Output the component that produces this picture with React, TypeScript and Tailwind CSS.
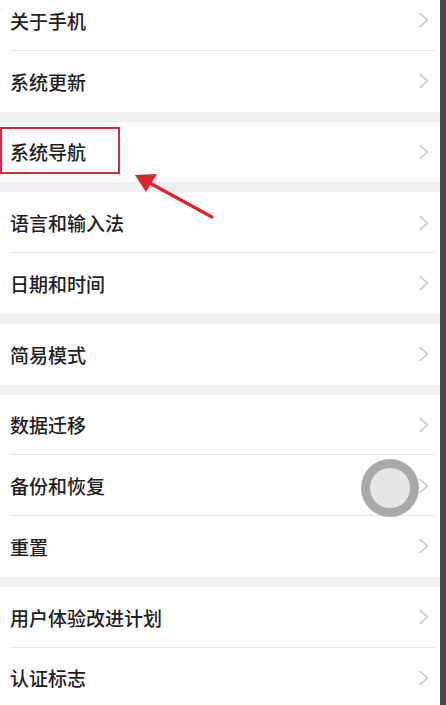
const GROUPS: string[][] = [
  ["关于手机", "系统更新"],
  ["系统导航"],
  ["语言和输入法", "日期和时间"],
  ["简易模式"],
  ["数据迁移", "备份和恢复", "重置"],
  ["用户体验改进计划", "认证标志"],
];

function Chevron() {
  return (
    <svg width="12" height="16" viewBox="0 0 12 16" className="shrink-0">
      <path d="M2 1.5 L9.5 8 L2 14.5" fill="none" stroke="#c6c6c6" strokeWidth="1.6" strokeLinecap="round" strokeLinejoin="round" />
    </svg>
  );
}

function Row({ label, last }: { label: string; last: boolean }) {
  return (
    <div className="relative flex h-[60.75px] items-center justify-between pl-[10px] pr-[10px]">
      <span className="text-[19px] font-medium leading-none text-[#1f1f1f]">{label}</span>
      <Chevron />
      {!last && <div className="absolute bottom-0 left-[10px] right-[5px] h-px bg-[#e6e6e6]" />}
    </div>
  );
}

export default function App() {
  return (
    <div
      className="relative flex h-[705px] w-[446px] overflow-hidden bg-[#484848]"
      style={{ fontFamily: '"Noto Sans CJK SC", "Noto Sans", sans-serif' }}
    >
      <div className="flex w-[440px] flex-col gap-[10px] bg-[#f0f0f0]">
        {GROUPS.map((group, gi) => (
          <div key={gi} className={`bg-[#fdfdfd] ${gi === 0 ? "-mt-[10px]" : ""}`}>
            {group.map((label, i) => (
              <Row key={label} label={label} last={i === group.length - 1} />
            ))}
          </div>
        ))}
      </div>
      <div className="w-[6px]" />

      {/* annotation box */}
      <div className="absolute left-0 top-[127px] h-[47px] w-[120px] border-2 border-[#c9303a]" />

      {/* annotation arrow */}
      <svg className="pointer-events-none absolute left-0 top-0" width="446" height="705">
        <line x1="212" y1="217" x2="146" y2="181" stroke="#d8262e" strokeWidth="3.2" strokeLinecap="round" />
        <polygon points="135,175 157,174 146,192" fill="#d8262e" />
      </svg>

      {/* floating assistive button */}
      <div className="absolute left-[361px] top-[459px] flex h-[58px] w-[58px] items-center justify-center rounded-full bg-[#a9a9a9]">
        <div className="h-[40px] w-[40px] rounded-full bg-[#e6e6e6]" />
      </div>
    </div>
  );
}
